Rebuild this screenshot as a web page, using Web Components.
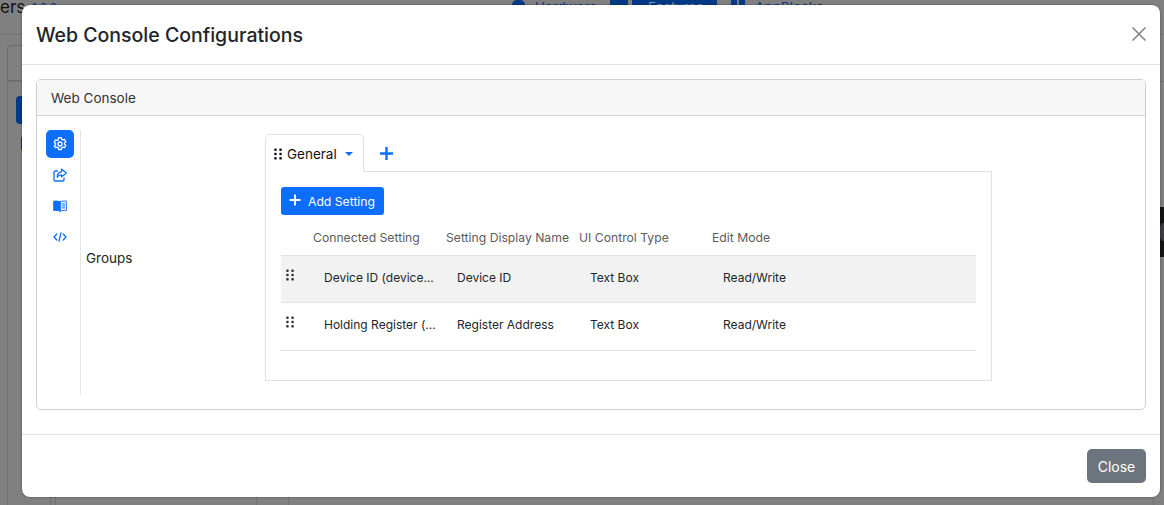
<!DOCTYPE html>
<html>
<head>
<meta charset="utf-8">
<title>Web Console Configurations</title>
<style>
  html, body { margin: 0; height: 100%; overflow: hidden; background: #808080; }
  body { font-family: Inter, "Liberation Sans", sans-serif; color: #212529; }
</style>
</head>
<body>
<page-behind></page-behind>
<config-modal heading="Web Console Configurations">
  <console-card heading="Web Console">
    <side-nav></side-nav>
    <group-editor label="Groups">
      <setting-row slot="rows" setting="Device ID (device..." name="Device ID" control="Text Box" mode="Read/Write" active></setting-row>
      <setting-row slot="rows" setting="Holding Register (..." name="Register Address" control="Text Box" mode="Read/Write"></setting-row>
    </group-editor>
  </console-card>
</config-modal>

<script>
const GRIP = `<svg viewBox="0 0 8 12" width="8" height="12" fill="currentColor">
  <rect x=".2" y=".4" width="2.500" height="2.500" rx=".9"/><rect x="5.300" y=".4" width="2.500" height="2.500" rx=".9"/>
  <rect x=".2" y="4.750" width="2.500" height="2.500" rx=".9"/><rect x="5.300" y="4.750" width="2.500" height="2.500" rx=".9"/>
  <rect x=".2" y="9.100" width="2.500" height="2.500" rx=".9"/><rect x="5.300" y="9.100" width="2.500" height="2.500" rx=".9"/></svg>`;

// the dimmed application behind the dialog, only slivers of it show
class PageBehind extends HTMLElement {
  constructor() {
    super();
    this.attachShadow({ mode: "open" }).innerHTML = `
      <style>
        :host { display: block; position: absolute; inset: 0; overflow: hidden; background: #808080; color: #111; }
        div, span { position: absolute; }
        .title { left: 0; top: 0; font-size: 17px; line-height: 14px; white-space: nowrap; }
        .ver { left: 32px; top: 2px; font-size: 11.500px; line-height: 12px; color: #0a3a80; }
        .link { top: 0; font-size: 13.500px; line-height: 14px; color: #0a3a80; white-space: nowrap; }
        .hline { height: 1px; background: #717171; }
        .vline { width: 1px; background: #717171; }
        .nav { background: #003a85; height: 5px; top: 0; }
        .tab-edge { left: 7px; top: 45px; width: 40px; height: 36px; border: 1px solid #6c6c6c; border-radius: 4px 0 0 0; box-sizing: border-box; }
        .btn { left: 16px; top: 96px; width: 20px; height: 28px; background: #003a85; border-radius: 4px; }
        .mark { left: 21px; top: 137px; width: 3px; height: 13px; background: #003a85; }
        .video { right: 0; top: 207px; width: 4px; height: 50px; background: #141414; }
        .video::after { content: ""; position: absolute; left: 0; top: 16px; width: 4px; height: 18px; background: #3a3c40; border-radius: 9px 0 0 9px; }
      </style>
      <span class="title">ers</span>
      <span class="ver">1.0.0</span>
      <div class="hline" style="top:34px;left:0;right:0"></div>
      <div class="hline" style="top:81px;left:7px;right:0"></div>
      <div class="tab-edge"></div>
      <div class="btn"></div>
      <div class="mark"></div>
      <div class="vline" style="left:7px;top:81px;bottom:0"></div>
      <div class="vline" style="left:50px;top:490px;bottom:0"></div>
      <div class="vline" style="left:55px;top:490px;bottom:0"></div>
      <div class="vline" style="left:256px;top:490px;bottom:0"></div>
      <div class="vline" style="left:288px;top:490px;bottom:0"></div>
      <div class="vline" style="left:1153px;top:490px;bottom:0"></div>
      <div class="nav" style="left:512px;width:13px;border-radius:6px 6px 0 0"></div>
      <span class="link" style="left:535px">Hardware</span>
      <div class="nav" style="left:610px;width:18px"></div>
      <div class="nav" style="left:632px;width:85px"></div>
      <span class="link" style="left:648px;color:#7f93b0">Features</span>
      <div class="nav" style="left:731px;width:6px"></div>
      <div class="nav" style="left:739px;width:6px"></div>
      <span class="link" style="left:755px">AppBlocks</span>
      <div class="video"></div>`;
  }
}

class ConfigModal extends HTMLElement {
  constructor() {
    super();
    this.attachShadow({ mode: "open" }).innerHTML = `
      <style>
        :host { display: flex; flex-direction: column; position: absolute; left: 22px; top: 5px; width: 1138px; height: 492px;
          background: #fff; border-radius: 8px; box-shadow: 0 0 2px rgba(0,0,0,.5); }
        header { display: flex; align-items: center; justify-content: space-between; height: 59px; padding: 0 14px; border-bottom: 1px solid #dee2e6; }
        h1 { margin: 0; font-size: 19.500px; font-weight: 500; line-height: 24px; }
        .x { width: 14px; height: 14px; margin-top: -2px; color: #808080; }
        main { flex: 1; padding: 14px; }
        footer { display: flex; justify-content: flex-end; height: 63px; padding-top: 14px; box-sizing: border-box; padding-right: 14px; border-top: 1px solid #dee2e6; }
        button { height: 34px; width: 59px; border: 0; border-radius: 5px; background: #6c757d; color: #fff; font: 14px Inter, "Liberation Sans", sans-serif; padding: 0; }
      </style>
      <header>
        <h1></h1>
        <svg class="x" viewBox="0 0 14 14" fill="none" stroke="currentColor" stroke-width="1.500"><path d="M.5.5l13 13M13.500.5l-13 13"/></svg>
      </header>
      <main><slot></slot></main>
      <footer><button>Close</button></footer>`;
  }
  connectedCallback() {
    this.shadowRoot.querySelector("h1").textContent = this.getAttribute("heading");
  }
}

class ConsoleCard extends HTMLElement {
  constructor() {
    super();
    this.attachShadow({ mode: "open" }).innerHTML = `
      <style>
        :host { display: flex; flex-direction: column; height: 331px; box-sizing: border-box; border: 1px solid #cfcfcf; border-radius: 5px; }
        .head { height: 35px; line-height: 36px; padding-left: 14px; font-size: 13.500px; color: #333; background: #f7f7f7; border-bottom: 1px solid #d4d4d4; border-radius: 4px 4px 0 0; flex: none; }
        .body { display: flex; flex: 1; padding: 14px 0 14px 9px; }
      </style>
      <div class="head"></div>
      <div class="body"><slot></slot></div>`;
  }
  connectedCallback() {
    this.shadowRoot.querySelector(".head").textContent = this.getAttribute("heading");
  }
}

class SideNav extends HTMLElement {
  constructor() {
    super();
    this.attachShadow({ mode: "open" }).innerHTML = `
      <style>
        :host { display: flex; flex-direction: column; align-items: flex-start; gap: 3px; width: 34px; height: 265px; border-right: 1px solid #e6e6e6; flex: none; color: #0d6efd; }
        a { display: flex; align-items: center; justify-content: center; width: 28px; height: 28px; border-radius: 5px; }
        a.on { background: #0d6efd; color: #fff; }
        svg { width: 14px; height: 14px; fill: none; stroke: currentColor; stroke-width: 1.300; stroke-linecap: round; stroke-linejoin: round; }
      </style>
      <a class="on"><svg viewBox="0 0 14 14"><path d="M5.700 1h2.600l.4 1.700 1.100.6 1.700-.5 1.300 2.300-1.300 1.200v1.300l1.300 1.200-1.300 2.300-1.700-.5-1.100.6-.4 1.700H5.700l-.4-1.700-1.100-.6-1.700.5L1.200 9.300l1.300-1.200V6.800L1.200 5.600l1.300-2.300 1.700.5 1.100-.6z" transform="translate(0 -.4)"/><circle cx="7" cy="7" r="2"/></svg></a>
      <a><svg viewBox="0 0 14 14"><path d="M4.500 3H2.300A1.300 1.300 0 0 0 1 4.300v7.400A1.300 1.300 0 0 0 2.300 13h7.400A1.300 1.300 0 0 0 11 11.700V10"/><path d="M8.600 1.200l4.900 3.800-4.900 3.800V6.800c-2 0-3.400.6-4.400 2.400 0-3.200 1.600-5.100 4.400-5.400z"/></svg></a>
      <a><svg viewBox="0 0 14 14" style="stroke-width:1"><path d="M7 2.800C5.500 2.100 3 1.900.7 2.200v9.300c2.300-.3 4.800-.1 6.300.6z" fill="currentColor"/><path d="M7 2.800c1.500-.7 4-.9 6.300-.6v9.300c-2.300-.3-4.800-.1-6.300.6zM9 4.900h2.600M9 6.900h2.600M9 8.900h2.600"/></svg></a>
      <a><svg viewBox="0 0 14 14"><path d="M3.800 4L1 7l2.800 3M10.200 4L13 7l-2.800 3M8 2.800L6 11.200"/></svg></a>`;
  }
}

class GroupEditor extends HTMLElement {
  constructor() {
    super();
    this.attachShadow({ mode: "open" }).innerHTML = `
      <style>
        :host { display: grid; grid-template-columns: 179px 727px; padding-left: 5px; flex: none; color: #212529; }
        .label { align-self: center; font-size: 13.500px; margin-top: -8px; position: relative; top: -1px; }
        .tabs { display: flex; align-items: center; height: 38px; margin-top: 4px; }
        .tab { display: flex; align-items: center; gap: 5px; box-sizing: border-box; width: 99px; height: 38px; padding-left: 8px; font-size: 13.500px; color: #111;
          background: #fff; border: 1px solid #dee2e6; border-bottom: 0; border-radius: 5px 5px 0 0; position: relative; z-index: 1; }
        .caret { width: 0; height: 0; margin-left: 3.500px; border: 4.500px solid transparent; border-top-color: #0d6efd; border-bottom: 0; }
        .plus { width: 13px; height: 13px; margin-left: 15.500px; stroke: #0d6efd; stroke-width: 2.400; }
        .panel { height: 210px; margin-top: -1px; box-sizing: border-box; border: 1px solid #dee2e6; padding: 15px; }
        .add { display: flex; align-items: center; gap: 7px; width: 103px; height: 28px; box-sizing: border-box; padding-left: 8px; border-radius: 3px; background: #0d6efd; color: #fff; font-size: 12.200px; }
        .add svg { width: 12px; height: 12px; margin-top: -2px; stroke: #fff; stroke-width: 2; }
        .cols { display: grid; grid-template-columns: 133px 133px 133px 1fr; height: 40px; box-sizing: border-box; padding-top: 4px; align-items: center; padding-left: 32px; font-size: 12.200px; color: #5c5c5c; }
      </style>
      <div class="label"></div>
      <div>
        <div class="tabs">
          <div class="tab">${GRIP}<span>General</span><i class="caret"></i></div>
          <svg class="plus" viewBox="0 0 13 13"><path d="M6.500 0v13M0 6.500h13"/></svg>
        </div>
        <div class="panel">
          <div class="add"><svg viewBox="0 0 12 12"><path d="M6 .5v11M.5 6h11"/></svg><span>Add Setting</span></div>
          <div class="cols"><span>Connected Setting</span><span>Setting Display Name</span><span>UI Control Type</span><span>Edit Mode</span></div>
          <slot name="rows"></slot>
        </div>
      </div>`;
  }
  connectedCallback() {
    this.shadowRoot.querySelector(".label").textContent = this.getAttribute("label");
  }
}

class SettingRow extends HTMLElement {
  constructor() {
    super();
    this.attachShadow({ mode: "open" }).innerHTML = `
      <style>
        :host { display: grid; grid-template-columns: 133px 133px 133px 1fr; align-items: center; position: relative; height: 48px; box-sizing: border-box; padding: 0 0 4px 43px;
          border-bottom: 1px solid #dee2e6; font-size: 12px; color: #212529; }
        :host([active]) { background: #f2f2f2; border-top: 1px solid #dee2e6; }
        .grip { position: absolute; left: 5px; top: 13px; color: #333; line-height: 0; }
      </style>
      <span class="grip">${GRIP}</span>
      <span class="a"></span><span class="b"></span><span class="c"></span><span class="d"></span>`;
  }
  connectedCallback() {
    const r = this.shadowRoot;
    r.querySelector(".a").textContent = this.getAttribute("setting");
    r.querySelector(".b").textContent = this.getAttribute("name");
    r.querySelector(".c").textContent = this.getAttribute("control");
    r.querySelector(".d").textContent = this.getAttribute("mode");
  }
}

customElements.define("page-behind", PageBehind);
customElements.define("config-modal", ConfigModal);
customElements.define("console-card", ConsoleCard);
customElements.define("side-nav", SideNav);
customElements.define("group-editor", GroupEditor);
customElements.define("setting-row", SettingRow);
</script>
</body>
</html>
